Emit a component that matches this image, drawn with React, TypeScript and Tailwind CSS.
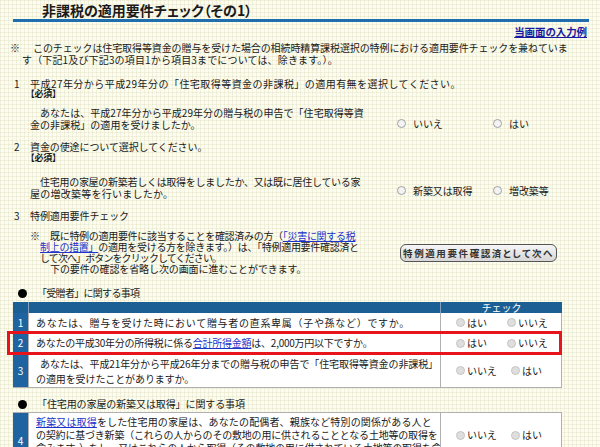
import React from "react";

const OutRadio = ({ label, w }: { label: string; w?: string }) => (
  <span className={"flex items-center " + (w ?? "")}>
    <span className="inline-block w-[9px] h-[9px] rounded-full border border-[#a0a0a0] bg-[#f3f3f3]" />
    <span className="ml-[7px]">{label}</span>
  </span>
);

const TRadio = ({ label, w }: { label: string; w?: string }) => (
  <span className={"flex items-center " + (w ?? "")}>
    <span className="inline-block w-[9px] h-[9px] rounded-full border border-[#c4c4c4] bg-[#dedede]" />
    <span className="ml-[2px]">{label}</span>
  </span>
);

export default function App() {
  return (
    <div className="relative w-[600px] h-[447px] overflow-hidden text-[10px] leading-[12px] tracking-[-0.1px] text-[#1a1a1a] font-['Noto_Sans_CJK_JP','Noto_Sans',sans-serif] bg-[#fcfcef] bg-[linear-gradient(rgba(170,170,110,0.13)_1px,transparent_1px),linear-gradient(90deg,rgba(170,170,110,0.13)_1px,transparent_1px)] bg-[size:4px_4px]">
      <div className="pl-[42px] pt-[2px] h-[18px] text-[14px] leading-[16px] tracking-normal font-bold whitespace-nowrap [font-feature-settings:'palt']">
        非課税の適用要件チェック（その1）
      </div>
      <div className="ml-[13px] mt-[1px] w-[576px] h-[3px] bg-[#1f6fae]" />
      <div className="mt-[4px] flex justify-end pr-[13px]">
        <a className="text-[10.5px] font-bold underline text-[#1a1aa0]">当画面の入力例</a>
      </div>

      <div className="mt-[4px] whitespace-nowrap">
        <div className="pl-[10px]">
          <span className="inline-block w-[23px]">※</span>
          このチェックは住宅取得等資金の贈与を受けた場合の相続時精算課税選択の特例における適用要件チェックを兼ねていま
        </div>
        <div className="pl-[22px] tracking-[0.15px]">す（下記1及び下記3の項目1から項目3までについては、除きます。）。</div>
      </div>

      {/* Item 1 */}
      <div className="mt-[12px] flex leading-[11px] whitespace-nowrap">
        <span className="w-[30px] pl-[14px]">1</span>
        <span className="tracking-[0.45px]">平成27年分から平成29年分の「住宅取得等資金の非課税」の適用有無を選択してください。</span>
      </div>
      <div className="pl-[30px] text-[9px] leading-[9px] font-bold [font-feature-settings:'palt']">【必須】</div>
      <div className="mt-[9px] flex">
        <div className="w-[397px] pl-[30px] whitespace-nowrap tracking-[0.05px]">
          <div className="pl-[10px]">あなたは、平成27年分から平成29年分の贈与税の申告で「住宅取得等資</div>
          <div>金の非課税」の適用を受けましたか。</div>
        </div>
        <div className="mt-[9px] flex leading-[10px]">
          <OutRadio label="いいえ" w="w-[96px]" />
          <OutRadio label="はい" />
        </div>
      </div>

      {/* Item 2 */}
      <div className="mt-[10px] flex leading-[11px] whitespace-nowrap">
        <span className="w-[30px] pl-[14px]">2</span>
        <span>資金の使途について選択してください。</span>
      </div>
      <div className="mt-[1px] pl-[30px] text-[9px] leading-[9px] font-bold [font-feature-settings:'palt']">【必須】</div>
      <div className="mt-[14px] flex">
        <div className="w-[397px] pl-[30px] whitespace-nowrap">
          <div className="pl-[10px] tracking-[-0.28px]">住宅用の家屋の新築若しくは取得をしましたか、又は既に居住している家</div>
          <div className="tracking-[0.25px]">屋の増改築等を行いましたか。</div>
        </div>
        <div className="mt-[5px] flex leading-[10px]">
          <OutRadio label="新築又は取得" w="w-[96px]" />
          <OutRadio label="増改築等" />
        </div>
      </div>

      {/* Item 3 */}
      <div className="mt-[10px] flex leading-[11px] whitespace-nowrap">
        <span className="w-[30px] pl-[14px]">3</span>
        <span>特例適用要件チェック</span>
      </div>
      <div className="mt-[9px] flex">
        <div className="w-[400px] pl-[30px] leading-[11px] whitespace-nowrap">
          <div className="tracking-[-0.3px]">
            <span className="inline-block w-[20px]">※</span>
            既に特例の適用要件に該当することを確認済みの方（
            <a className="underline text-[#2233cc]">「災害に関する税</a>
          </div>
          <div className="pl-[10px] tracking-[-0.3px]">
            <a className="underline text-[#2233cc]">制上の措置」</a>
            の適用を受ける方を除きます。）は、「特例適用要件確認済と
          </div>
          <div className="pl-[10px] tracking-[-0.9px]">して次へ」ボタンをクリックしてください。</div>
          <div className="pl-[20px]">下の要件の確認を省略し次の画面に進むことができます。</div>
        </div>
        <div className="mt-[14px]">
          <button className="w-[157px] h-[18px] rounded-[6px] border-[1.5px] border-[#555] bg-[linear-gradient(#f6f6f6,#d6d6d6)] text-[9.5px] leading-[14px] font-bold tracking-[1.6px] text-[#333] whitespace-nowrap [font-feature-settings:'palt']">
            特例適用要件確認済として次へ
          </button>
        </div>
      </div>

      {/* Section 1 */}
      <div className="mt-[13px] flex items-center">
        <span className="ml-[18px] w-[9px] h-[9px] rounded-full bg-black" />
        <span className="ml-[10px] tracking-[-0.7px]">「受贈者」に関する事項</span>
      </div>
      <div className="mt-[3px] ml-[13px] w-[549px]">
        <div className="flex h-[11px] bg-[#1b5f95] text-white text-[10px] leading-[11px]">
          <div className="w-[16px] shrink-0 border-r border-[#7fa2c2]" />
          <div className="flex-1 border-r border-[#7fa2c2]" />
          <div className="w-[121px] shrink-0 text-center">チェック</div>
        </div>
        <div className="flex h-[20px] bg-white border-b border-[#b0b0b0]">
          <div className="w-[16px] shrink-0 bg-[#1f64a0] text-white flex items-center justify-center border-r border-[#b0b0b0]">1</div>
          <div className="flex-1 min-w-0 overflow-hidden pl-[7px] flex items-center border-r border-[#b0b0b0] whitespace-nowrap tracking-[0.7px]">
            あなたは、贈与を受けた時において贈与者の直系卑属（子や孫など）ですか。
          </div>
          <div className="w-[121px] shrink-0 flex items-center pl-[15px] border-r border-[#b0b0b0]">
            <TRadio label="はい" w="w-[51px]" />
            <TRadio label="いいえ" />
          </div>
        </div>
        <div className="flex h-[21px] bg-white border-b border-[#b0b0b0]">
          <div className="w-[16px] shrink-0 bg-[#1f64a0] text-white flex items-center justify-center border-r border-[#b0b0b0]">2</div>
          <div className="flex-1 min-w-0 overflow-hidden pl-[7px] flex items-center border-r border-[#b0b0b0] whitespace-nowrap tracking-[-0.25px]">
            あなたの平成30年分の所得税に係る<a className="underline text-[#1a35c8]">合計所得金額</a>は、2,000万円以下ですか。
          </div>
          <div className="w-[121px] shrink-0 flex items-center pl-[15px] border-r border-[#b0b0b0]">
            <TRadio label="はい" w="w-[51px]" />
            <TRadio label="いいえ" />
          </div>
        </div>
        <div className="flex h-[34px] bg-white border-b border-[#b0b0b0]">
          <div className="w-[16px] shrink-0 bg-[#1f64a0] text-white flex items-center justify-center border-r border-[#b0b0b0]">3</div>
          <div className="flex-1 min-w-0 overflow-hidden pl-[7px] flex flex-col justify-center leading-[15px] border-r border-[#b0b0b0] whitespace-nowrap">
            <div className="pl-[4px]">あなたは、平成21年分から平成26年分までの贈与税の申告で「住宅取得等資金の非課税」</div>
            <div>の適用を受けたことがありますか。</div>
          </div>
          <div className="w-[121px] shrink-0 flex items-center pl-[15px] border-r border-[#b0b0b0]">
            <TRadio label="いいえ" w="w-[55px]" />
            <TRadio label="はい" />
          </div>
        </div>
      </div>

      {/* Section 2 */}
      <div className="mt-[10px] flex items-center">
        <span className="ml-[18px] w-[9px] h-[9px] rounded-full bg-black" />
        <span className="ml-[10px]">「住宅用の家屋の新築又は取得」に関する事項</span>
      </div>
      <div className="mt-[2px] ml-[13px] w-[549px]">
        <div className="flex bg-white border-t border-b border-[#b0b0b0]">
          <div className="w-[16px] shrink-0 bg-[#1f64a0] text-white flex items-center justify-center border-r border-[#b0b0b0]">4</div>
          <div className="flex-1 min-w-0 overflow-hidden pl-[7px] pt-[2px] pb-[2px] leading-[13px] border-r border-[#b0b0b0] whitespace-nowrap">
            <div className="tracking-[0.15px]">
              <a className="underline text-[#1a35c8]">新築又は取得</a>をした住宅用の家屋は、あなたの配偶者、親族など特別の関係がある人と
            </div>
            <div className="tracking-[-0.2px]">の契約に基づき新築（これらの人からのその敷地の用に供されることとなる土地等の取得を</div>
            <div className="tracking-[-0.2px]">含みます。）をし、又はこれらの人から取得（その敷地の用に供されている土地等の取得を含</div>
            <div>みます。）したものですか。</div>
          </div>
          <div className="w-[121px] shrink-0 flex items-start pl-[15px] border-r border-[#b0b0b0]">
            <div className="mt-[17px] flex leading-[10px]">
              <TRadio label="いいえ" w="w-[55px]" />
              <TRadio label="はい" />
            </div>
          </div>
        </div>
      </div>

      <div className="absolute left-[7px] top-[331px] w-[555px] h-[24px] border-[3px] border-[#e8141b] pointer-events-none" />
    </div>
  );
}
